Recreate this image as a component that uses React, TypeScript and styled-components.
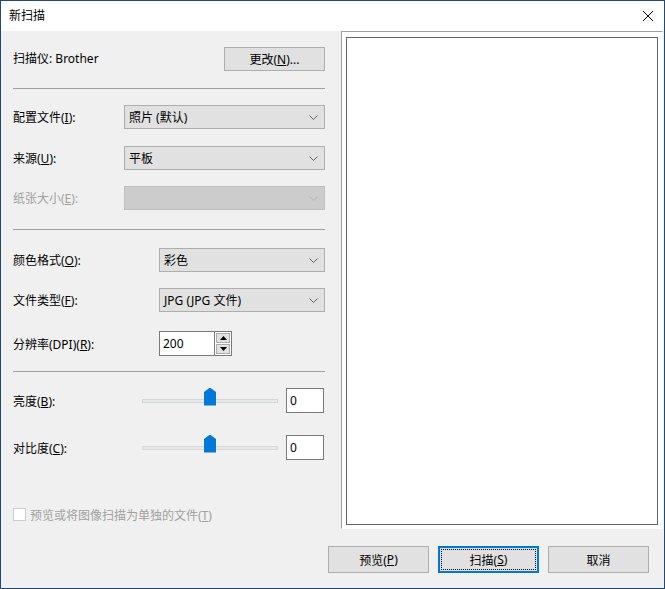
import React from 'react';
import styled, {createGlobalStyle} from "styled-components";

const GlobalStyle = createGlobalStyle`
    html, body {
        margin: 0;
        padding: 0;
        background: #fff;
    }
    * {
        box-sizing: border-box;
    }
`

const Window = styled.div`
    width: 665px;
    height: 589px;
    border: 1px solid #1d4b73;
    display: flex;
    flex-direction: column;
    font-family: "Noto Sans", "Noto Sans CJK SC", sans-serif;
    font-size: 12px;
    color: #000;
    background-color: #f0f0f0;
`
const TitleBar = styled.div`
    height: 30px;
    background-color: #fff;
    display: flex;
    align-items: center;
    justify-content: space-between;
    padding: 0 11px 0 8px;
`
const Title = styled.span`
    font-size: 12px;
    line-height: 1;
`
const CloseBtn = styled.div`
    width: 10px;
    height: 10px;
    display: flex;
`
const Content = styled.div`
    height: 498px;
    display: flex;
    padding-left: 12px;
`
const LeftPanel = styled.div`
    width: 312px;
    display: flex;
    flex-direction: column;
`
const Row = styled.div<{top: number; h?: number}>`
    display: flex;
    align-items: center;
    margin-top: ${p => p.top}px;
    height: ${p => p.h ?? 24}px;
`
const Label = styled.div<{w: number; disabled?: boolean; raise?: number}>`
    width: ${p => p.w}px;
    flex-shrink: 0;
    color: ${p => p.disabled ? "#a0a0a0" : "#000"};
    white-space: nowrap;
    margin-bottom: ${p => p.raise ?? 0}px;
`
const Separator = styled.div<{top: number}>`
    margin-top: ${p => p.top}px;
    height: 1px;
    background-color: #a0a0a0;
`
const Button = styled.div<{focused?: boolean}>`
    width: 101px;
    height: 100%;
    background-color: #e1e1e1;
    border: ${p => p.focused ? "2px solid #0078d7" : "1px solid #adadad"};
    display: flex;
    align-items: center;
    justify-content: center;
    position: relative;
    ${p => p.focused ? `
        &::after {
            content: "";
            position: absolute;
            inset: 1px;
            border: 1px dotted #000;
        }
    ` : ""}
`
const SelectBox = styled.div<{disabled?: boolean}>`
    flex: 1;
    height: 24px;
    background-color: ${p => p.disabled ? "#cccccc" : "#e1e1e1"};
    border: 1px solid ${p => p.disabled ? "#bfbfbf" : "#adadad"};
    display: flex;
    align-items: center;
    justify-content: space-between;
    padding: 0 6px 0 4px;
`
const Spacer = styled.div`
    flex: 1;
`
const NumInput = styled.div<{w: number}>`
    width: ${p => p.w}px;
    height: 25px;
    background-color: #fff;
    border: 1px solid #7a7a7a;
    display: flex;
    align-items: center;
    padding-left: 3px;
`
const SpinBox = styled.div`
    display: flex;
    height: 25px;
`
const SpinButtons = styled.div`
    width: 17px;
    height: 25px;
    border: 1px solid #7a7a7a;
    border-left: none;
    background-color: #fff;
    display: flex;
    flex-direction: column;
    gap: 1px;
    padding: 1px;
`
const SpinBtn = styled.div`
    flex: 1;
    background-color: #e1e1e1;
    border: 1px solid #adadad;
    display: flex;
    align-items: center;
    justify-content: center;
`
const SliderArea = styled.div`
    width: 136px;
    height: 24px;
    margin-left: 129px;
    margin-right: 8px;
    position: relative;
    display: flex;
    align-items: center;
`
const Track = styled.div`
    width: 100%;
    height: 4px;
    background-color: #e7eaea;
    border: 1px solid #d6d6d6;
`
const Thumb = styled.div`
    position: absolute;
    left: 62px;
    top: -1px;
    width: 12px;
    height: 18px;
    background-color: #0078d7;
    clip-path: polygon(50% 0, 100% 25%, 100% 100%, 0 100%, 0 25%);
`
const CheckRow = styled.div`
    margin-top: 48px;
    display: flex;
    align-items: center;
    gap: 4px;
    height: 13px;
    color: #a0a0a0;
`
const CheckBox = styled.div`
    width: 13px;
    height: 13px;
    border: 1px solid #cccccc;
    background-color: #fff;
`
const Preview = styled.div`
    width: 322px;
    height: 498px;
    margin-left: 16px;
    background-color: #fff;
    border-top: 1px solid #a0a0a0;
    border-left: 1px solid #a0a0a0;
    border-right: 1px solid #fff;
    border-bottom: 1px solid #fff;
    padding: 5px 4px 3px 4px;
`
const PreviewInner = styled.div`
    width: 100%;
    height: 100%;
    border: 1px solid #646464;
    background-color: #fff;
`
const Footer = styled.div`
    flex: 1;
    display: flex;
    justify-content: flex-end;
    align-items: flex-start;
    gap: 9px;
    padding: 17px 15px 0 0;
`
const FooterBtn = styled.div`
    height: 27px;
    display: flex;
`

function Chevron({disabled}: {disabled?: boolean}) {
    return (
        <svg width="9" height="5" viewBox="0 0 9 5">
            <path d="M0.5 0.5 L4.5 4.5 L8.5 0.5" fill="none" stroke={disabled ? "#b5b5b5" : "#606060"} strokeWidth="1"/>
        </svg>
    );
}

function Select({value, disabled}: {value?: string; disabled?: boolean}) {
    return (
        <SelectBox disabled={disabled}>
            <span>{value}</span>
            <Chevron disabled={disabled}/>
        </SelectBox>
    );
}

function Tri({up}: {up?: boolean}) {
    return (
        <svg width="7" height="4" viewBox="0 0 7 4">
            <path d={up ? "M0 4 L3.5 0 L7 4 Z" : "M0 0 L3.5 4 L7 0 Z"} fill="#000"/>
        </svg>
    );
}

export default function App() {
    return (
        <>
            <GlobalStyle/>
            <Window>
                <TitleBar>
                    <Title>新扫描</Title>
                    <CloseBtn>
                        <svg width="10" height="10" viewBox="0 0 10 10">
                            <path d="M0 0 L10 10 M10 0 L0 10" stroke="#000" strokeWidth="1"/>
                        </svg>
                    </CloseBtn>
                </TitleBar>
                <Content>
                    <LeftPanel>
                        <Row top={16}>
                            <Label w={100} raise={3}>扫描仪: Brother</Label>
                            <Spacer/>
                            <Button>更改(<u>N</u>)...</Button>
                        </Row>
                        <Separator top={17}/>
                        <Row top={16}>
                            <Label w={111}>配置文件(<u>I</u>):</Label>
                            <Select value="照片 (默认)"/>
                        </Row>
                        <Row top={17}>
                            <Label w={111}>来源(<u>U</u>):</Label>
                            <Select value="平板"/>
                        </Row>
                        <Row top={16}>
                            <Label w={111} disabled>纸张大小(<u>E</u>):</Label>
                            <Select disabled/>
                        </Row>
                        <Separator top={19}/>
                        <Row top={18}>
                            <Label w={146}>颜色格式(<u>O</u>):</Label>
                            <Select value="彩色"/>
                        </Row>
                        <Row top={16}>
                            <Label w={146}>文件类型(<u>F</u>):</Label>
                            <Select value="JPG (JPG 文件)"/>
                        </Row>
                        <Row top={19} h={25}>
                            <Label w={146}>分辨率(DPI)(<u>R</u>):</Label>
                            <SpinBox>
                                <NumInput w={56}>200</NumInput>
                                <SpinButtons>
                                    <SpinBtn><Tri up/></SpinBtn>
                                    <SpinBtn><Tri/></SpinBtn>
                                </SpinButtons>
                            </SpinBox>
                        </Row>
                        <Separator top={15}/>
                        <Row top={16} h={25}>
                            <Label w={0}>亮度(<u>B</u>):</Label>
                            <SliderArea>
                                <Track/>
                                <Thumb/>
                            </SliderArea>
                            <NumInput w={38}>0</NumInput>
                        </Row>
                        <Row top={22} h={25}>
                            <Label w={0}>对比度(<u>C</u>):</Label>
                            <SliderArea>
                                <Track/>
                                <Thumb/>
                            </SliderArea>
                            <NumInput w={38}>0</NumInput>
                        </Row>
                        <CheckRow>
                            <CheckBox/>
                            <span>预览或将图像扫描为单独的文件(<u>T</u>)</span>
                        </CheckRow>
                    </LeftPanel>
                    <Preview>
                        <PreviewInner/>
                    </Preview>
                </Content>
                <Footer>
                    <FooterBtn><Button>预览(<u>P</u>)</Button></FooterBtn>
                    <FooterBtn><Button focused>扫描(<u>S</u>)</Button></FooterBtn>
                    <FooterBtn><Button>取消</Button></FooterBtn>
                </Footer>
            </Window>
        </>
    );
}
